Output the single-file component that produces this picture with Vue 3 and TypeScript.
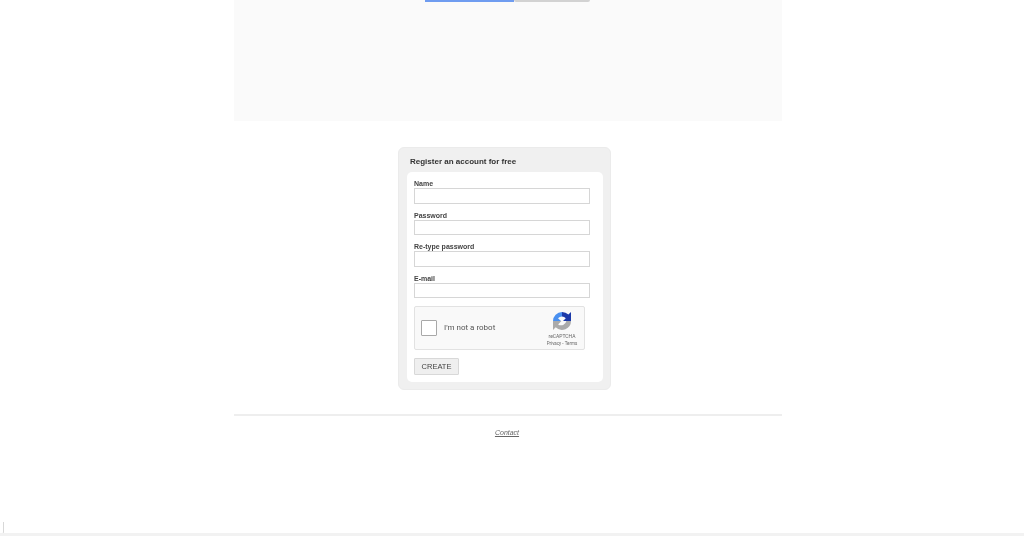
<script setup lang="ts">
const fields: string[] = ['Name', 'Password', 'Re-type password', 'E-mail']
</script>

<template>
  <div class="page">
    <main class="wrap">
      <section class="hero">
        <div class="tabs">
          <span class="tab-blue"></span>
          <span class="tab-gray"></span>
        </div>
      </section>

      <section class="card">
        <h2 class="title">Register an account for free</h2>
        <form class="panel" @submit.prevent>
          <div v-for="f in fields" :key="f" class="field">
            <label class="label">{{ f }}</label>
            <input class="input" type="text" />
          </div>
          <div class="captcha">
            <span class="check"></span>
            <span class="robot">I'm not a robot</span>
            <div class="brand">
              <svg class="logo" viewBox="0 0 20 20" aria-hidden="true">
                <path d="M10 1a9 9 0 0 1 6.4 2.6L19 1v9h-8l2.8-2.8A5.4 5.4 0 0 0 10 5.4z" fill="#1c3aa9" />
                <path d="M10 1v4.4a5.4 5.4 0 0 0-4 1.8L9 10H1a9 9 0 0 1 9-9z" fill="#4a90f0" />
                <path d="M1 10v9l2.7-2.7A9 9 0 0 0 19 10h-4.6a5.4 5.4 0 0 1-8.3 3.4L9.4 10z" fill="#aaaaaa" />
              </svg>
              <span class="rc">reCAPTCHA</span>
              <span class="terms">Privacy - Terms</span>
            </div>
          </div>
          <button class="create" type="button">CREATE</button>
        </form>
      </section>

      <footer class="foot">
        <a class="contact" href="#">Contact</a>
      </footer>
    </main>
    <div class="bottom">
      <span class="corner"></span>
    </div>
  </div>
</template>

<style scoped>
.page {
  width: 1024px;
  height: 538px;
  overflow: hidden;
  background: #fff;
  font-family: "Liberation Sans", Arial, sans-serif;
  display: flex;
  flex-direction: column;
  filter: blur(0.6px);
}
.wrap {
  width: 548px;
  margin-left: 234px;
  height: 520px;
  flex: none;
  display: flex;
  flex-direction: column;
}
.hero {
  height: 121px;
  background: #fafafa;
  flex: none;
  display: flex;
  padding-left: 191px;
  box-sizing: border-box;
}
.tabs {
  display: flex;
  height: 1.5px;
}
.tab-blue {
  width: 89px;
  background: #6f9cf0;
}
.tab-gray {
  width: 76px;
  background: #d2d2d2;
  border-radius: 0 0 2px 2px;
}
.card {
  width: 213px;
  height: 243.5px;
  margin: 25.5px 0 0.5px 164px;
  background: #f0f0f0;
  border: 1px solid #ebebeb;
  border-radius: 6px;
  box-sizing: border-box;
  padding: 0 7px 7px 8px;
  display: flex;
  flex-direction: column;
}
.title {
  margin: 0;
  height: 24.5px;
  line-height: 28px;
  padding-left: 3px;
  font-size: 8px;
  font-weight: bold;
  color: #333;
}
.panel {
  flex: 1;
  background: #fff;
  border-radius: 5px;
  padding: 7px 13px 0 7px;
  display: flex;
  flex-direction: column;
  box-sizing: border-box;
}
.field {
  display: flex;
  flex-direction: column;
  height: 31.5px;
}
.label {
  font-size: 7px;
  font-weight: bold;
  color: #444;
  height: 9px;
  line-height: 9px;
}
.input {
  width: 176px;
  height: 15.5px;
  box-sizing: border-box;
  border: 1px solid #d6d6d6;
  background: #fff;
  padding: 0;
  margin: 0;
  outline: none;
  flex: none;
}
.captcha {
  width: 171px;
  height: 44px;
  margin-top: 1px;
  box-sizing: border-box;
  background: #f9f9f9;
  border: 1px solid #e2e2e2;
  border-radius: 2px;
  display: flex;
  align-items: center;
  padding-left: 6px;
  flex: none;
}
.check {
  width: 16px;
  height: 16px;
  box-sizing: border-box;
  background: #fff;
  border: 1px solid #a8a8a8;
  border-radius: 1px;
  flex: none;
  margin-top: -1px;
}
.robot {
  margin-left: 7px;
  font-family: Roboto, "Liberation Sans", sans-serif;
  font-size: 8px;
  color: #555;
  margin-top: -1px;
}
.brand {
  margin-left: auto;
  width: 40px;
  margin-right: 2px;
  margin-top: 2px;
  display: flex;
  flex-direction: column;
  align-items: center;
}
.logo {
  margin-bottom: 2px;
  width: 20px;
  height: 20px;
}
.rc {
  font-family: Roboto, "Liberation Sans", sans-serif;
  font-size: 5px;
  line-height: 7px;
  color: #666;
}
.terms {
  font-family: Roboto, "Liberation Sans", sans-serif;
  font-size: 4.5px;
  line-height: 7px;
  color: #666;
}
.create {
  width: 45px;
  height: 17px;
  margin-top: 7.5px;
  padding: 0;
  box-sizing: border-box;
  background: #efefef;
  border: 1px solid #d8d8d8;
  border-radius: 1px;
  font-family: inherit;
  font-size: 7.5px;
  color: #444;
  flex: none;
}
.foot {
  margin-top: 23px;
  border-top: 2px solid #eeeeee;
  text-align: center;
  padding: 6px 2px 0 0;
  line-height: 15px;
}
.contact {
  font-size: 7px;
  font-style: italic;
  color: #666;
  text-decoration: underline;
}
.bottom {
  flex: 1;
  position: relative;
}
.bottom::after {
  content: "";
  position: absolute;
  left: 0;
  right: 0;
  top: 13px;
  height: 3px;
  background: #f2f2f2;
}
.corner {
  position: absolute;
  left: 0;
  top: 2px;
  width: 4px;
  height: 12px;
  border-right: 1px solid #d8d8d8;
  border-bottom: 1px solid #e8e8e8;
  border-bottom-right-radius: 2px;
  box-sizing: border-box;
}
</style>
